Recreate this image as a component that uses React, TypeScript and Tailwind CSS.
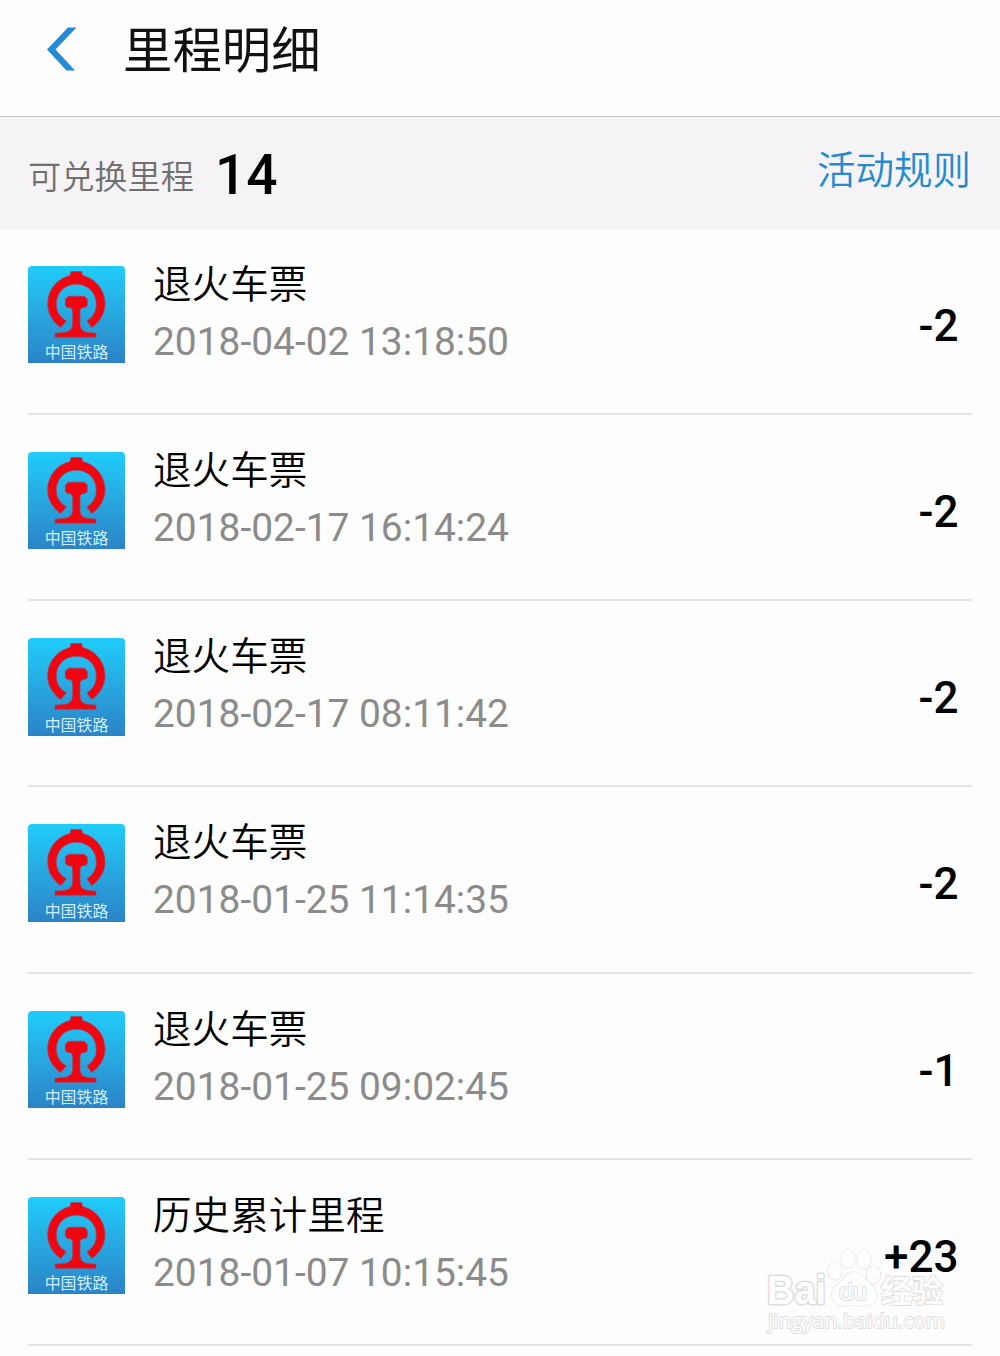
type MileageRecord = {
  title: string;
  time: string;
  change: string;
};

const records: MileageRecord[] = [
  { title: "退火车票", time: "2018-04-02 13:18:50", change: "-2" },
  { title: "退火车票", time: "2018-02-17 16:14:24", change: "-2" },
  { title: "退火车票", time: "2018-02-17 08:11:42", change: "-2" },
  { title: "退火车票", time: "2018-01-25 11:14:35", change: "-2" },
  { title: "退火车票", time: "2018-01-25 09:02:45", change: "-1" },
  { title: "历史累计里程", time: "2018-01-07 10:15:45", change: "+23" },
];

/* China Railway badge */
function RailwayIcon() {
  return (
    <div className="relative h-[97.4px] w-[97px] shrink-0 overflow-hidden rounded-t-[4px] bg-linear-to-b from-[#1fcdfa] to-[#2b83c6]">
      <svg viewBox="24 32 291 291" className="h-full w-full">
        <g stroke="#a8405c" strokeWidth="2" strokeLinejoin="round" fill="#ee0711">
          <path d="M150 60 L153 48 H185 L188 60 C226 69 255 103 255 145 C255 174 239 199 215 216 L201 196 C219 184 229 168 229 146 C229 111 203 86 169 86 C135 86 109 111 109 146 C109 168 119 184 139 196 L122 216 C98 199 83 174 83 145 C83 103 112 69 150 60 Z" />
          <path d="M145 122 H193 L202 131 V150 L197 155 C184 156 180 160 180 169 V205 C180 219 186 227 198 230 L228 233 V245 H105 V233 L138 230 C151 227 158 219 158 205 V169 C158 160 154 156 141 155 L136 150 V131 Z" />
        </g>
      </svg>
      <div className="absolute inset-x-0 bottom-0 text-center text-[15.9px] leading-5 text-[#d3eefb]">
        中国铁路
      </div>
    </div>
  );
}

function RecordRow({ record }: { record: MileageRecord }) {
  return (
    <li className="flex h-[186.2px] items-start border-b-2 border-[#e4e4e4] pt-[37px]">
      <RailwayIcon />
      <div className="ml-7 flex-1">
        <div className="text-[38.6px] leading-[38px] font-[350] text-black">{record.title}</div>
        <div className="mt-[15px] text-[38.9px] leading-[46px] text-[#8b8b8b]">{record.time}</div>
      </div>
      <div className="mt-[34px] mr-[13.5px] text-[44px] leading-[52px] font-medium text-black">
        {record.change}
      </div>
    </li>
  );
}

function Watermark() {
  return (
    <svg
      viewBox="0 0 250 126"
      className="absolute top-[1230px] left-[750px] h-[126px] w-[250px] [paint-order:stroke]"
      fill="#fdfdfd"
      stroke="#dedede"
      strokeWidth="1.8"
      strokeLinejoin="round"
    >
      <text
        x="17"
        y="74"
        fontSize="40"
        fontWeight="700"
        textLength="59"
        lengthAdjust="spacingAndGlyphs"
        strokeWidth="3"
        className="font-['Liberation_Sans',sans-serif]"
      >
        Bai
      </text>
      <g strokeWidth="1.2">
        <ellipse cx="85" cy="41" rx="7" ry="9" />
        <ellipse cx="98" cy="28.5" rx="7" ry="9.5" />
        <ellipse cx="114" cy="29.5" rx="7" ry="9.5" />
        <ellipse cx="123.5" cy="45" rx="7" ry="9" />
        <path d="M104 42 C96 42 94 49 88 54 C83 58 81 62 82 67 C84 76 92 77 104 75 C116 77 125 76 127 67 C128 61 124 57 119 52 C114 48 112 42 104 42 Z" />
      </g>
      <text x="89" y="70" fontSize="24" textLength="28" lengthAdjust="spacingAndGlyphs" className="font-['Liberation_Sans',sans-serif]">
        du
      </text>
      <text x="131" y="71.5" fontSize="31" fontWeight="700">
        经验
      </text>
      <text
        x="18"
        y="98"
        fontSize="20"
        fontWeight="500"
        textLength="177"
        lengthAdjust="spacingAndGlyphs"
        className="font-['Open_Sans',sans-serif]"
      >
        jingyan.baidu.com
      </text>
    </svg>
  );
}

export default function App() {
  return (
    <div className="relative h-[1356px] w-[1000px] overflow-hidden bg-[#fdfdfd] font-[Roboto,'Noto_Sans_CJK_SC',sans-serif]">
      <header className="flex h-[117px] items-start border-b border-[#c4c3c5]">
        <svg viewBox="0 0 30 44" className="mt-[27px] ml-[47px] h-[44px] w-[30px]">
          <path d="M21 0.5 H29.5 L8.5 22.5 L28 43.5 H19.5 L0 22.5 Z" fill="#238bd8" />
        </svg>
        <h1 className="mt-[22px] ml-[46px] text-[49.4px] leading-[58px] text-[#111]">里程明细</h1>
      </header>

      <section className="flex h-[113px] items-start bg-[#f5f3f6] pr-[29px] pl-7">
        <span className="mt-[41px] text-[33.2px] leading-[40px] font-[350] text-[#707070]">可兑换里程</span>
        <span className="mt-[26px] ml-[21px] text-[55px] leading-[64px] font-medium text-black">14</span>
        <a className="mt-[31px] ml-auto text-[38.5px] leading-[46px] font-[350] text-[#238bd0]">活动规则</a>
      </section>

      <Watermark />

      <ul className="relative -mt-[1.1px] px-7">
        {records.map((record) => (
          <RecordRow key={record.time} record={record} />
        ))}
      </ul>
    </div>
  );
}
